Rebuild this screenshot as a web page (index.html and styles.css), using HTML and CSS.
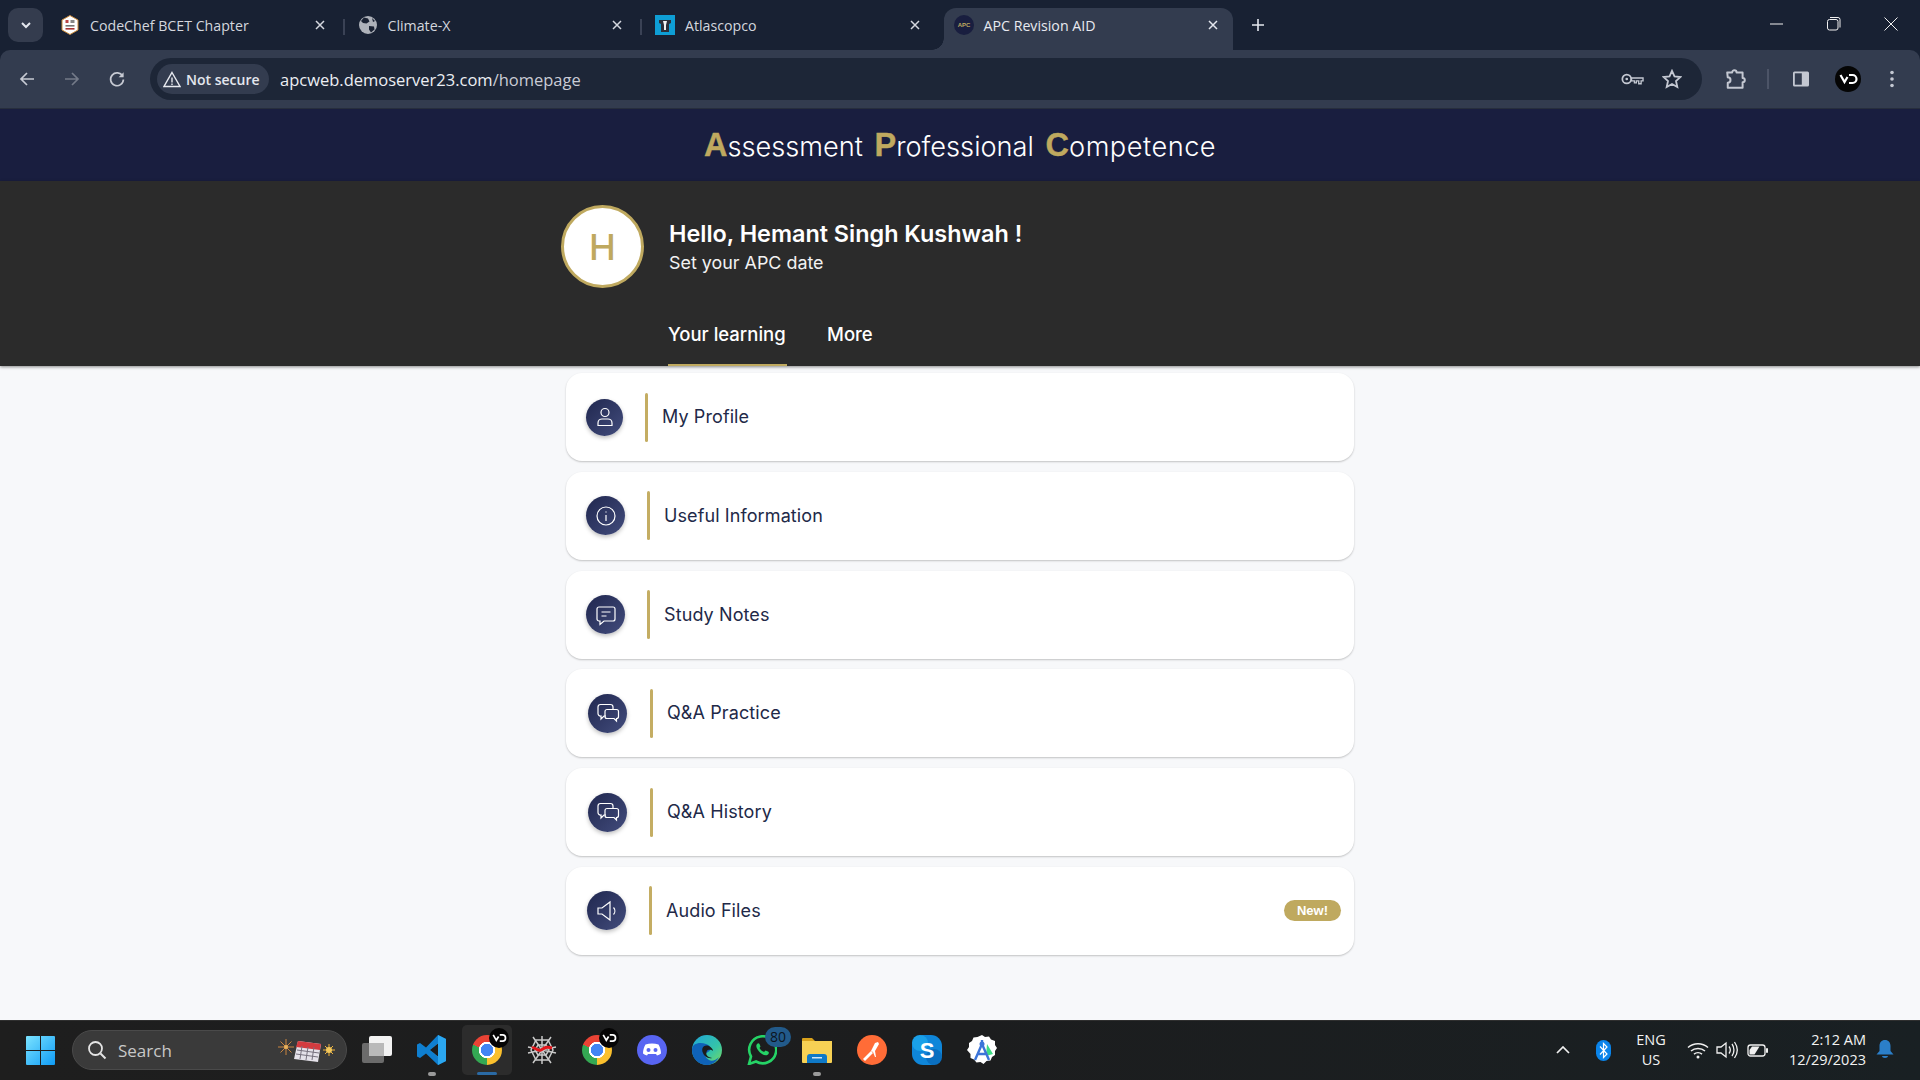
FILE: index.html
```html
<!DOCTYPE html>
<html lang="en">
<head>
<meta charset="utf-8">
<title>APC Revision AID</title>
<link rel="stylesheet" href="styles.css">
</head>
<body>
<div class="browser">
<div class="tabstrip">
  <button class="tab-search"><svg width="12" height="12" viewBox="0 0 12 12"><path d="M2 4l4 4 4-4" fill="none" stroke="#e4e7ee" stroke-width="2"/></svg></button>
  <div class="tab">
    <svg class="fav" viewBox="0 0 20 20"><path d="M10 0.5l8 4.5v10l-8 4.5-8-4.5V5z" fill="#fff" stroke="#c98a3c" stroke-width="1"/><rect x="5.5" y="5" width="3" height="3" fill="#b44"/><rect x="10.5" y="5" width="4" height="3" fill="#888"/><rect x="5.5" y="10" width="9" height="1.6" fill="#777"/><rect x="5.5" y="13" width="9" height="1.6" fill="#a33"/></svg>
    <span class="tab-title">CodeChef BCET Chapter</span>
    <svg class="tab-x" viewBox="0 0 10 10"><path d="M1 1l8 8M9 1l-8 8" stroke="#d5d8df" stroke-width="1.5"/></svg>
  </div>
  <div class="tab">
    <svg class="fav" viewBox="0 0 20 20"><circle cx="10" cy="10" r="9" fill="#aeb2ba"/><path d="M6 2.5l4 1 1.500 3-3 2-3.500-.5-2-2zM11 11l5 .5.5 3-3.500 3-2-3zM14 3l3 3-2 1z" fill="#1a2233"/></svg>
    <span class="tab-title">Climate-X</span>
    <svg class="tab-x" viewBox="0 0 10 10"><path d="M1 1l8 8M9 1l-8 8" stroke="#d5d8df" stroke-width="1.5"/></svg>
  </div>
  <div class="tab tab-last">
    <svg class="fav" viewBox="0 0 20 20"><rect width="20" height="20" fill="#0e9ed5"/><path d="M4 5h12v3l-2 1v8H6V9L4 8z" fill="#2b2f38"/><path d="M8 6h4l-1 4v5H9v-5z" fill="#f2f2f2"/></svg>
    <span class="tab-title">Atlascopco</span>
    <svg class="tab-x" viewBox="0 0 10 10"><path d="M1 1l8 8M9 1l-8 8" stroke="#d5d8df" stroke-width="1.5"/></svg>
  </div>
  <div class="tab tab-active">
    <svg class="fav" viewBox="0 0 20 20"><circle cx="10" cy="10" r="10" fill="#191e3f"/><text x="10" y="12" text-anchor="middle" class="fav-text">APC</text></svg>
    <span class="tab-title">APC Revision AID</span>
    <svg class="tab-x" viewBox="0 0 10 10"><path d="M1 1l8 8M9 1l-8 8" stroke="#e4e7ee" stroke-width="1.5"/></svg>
  </div>
  <svg class="tab-new" viewBox="0 0 14 14"><path d="M7 1v12M1 7h12" stroke="#e4e7ee" stroke-width="1.6"/></svg>
  <div class="winctl">
    <svg viewBox="0 0 14 14" class="w-min"><path d="M0 7h13" stroke="#f0f0f0" stroke-width="1"/></svg>
    <svg viewBox="0 0 14 14" class="w-max"><rect x="0.5" y="2.5" width="10.5" height="10.5" rx="2" fill="none" stroke="#f0f0f0"/><path d="M3 .5h8a2 2 0 0 1 2 2v8" fill="none" stroke="#f0f0f0"/></svg>
    <svg viewBox="0 0 14 14" class="w-close"><path d="M.5.5l13 13M13.500.5l-13 13" stroke="#f0f0f0" stroke-width="1"/></svg>
  </div>
</div>

<div class="toolbar">
  <svg class="nav" viewBox="0 0 18 18"><path d="M16 9H3M9 3L3 9l6 6" fill="none" stroke="#c7cad3" stroke-width="1.7"/></svg>
  <svg class="nav" viewBox="0 0 18 18"><path d="M2 9h13M9 3l6 6-6 6" fill="none" stroke="#747a88" stroke-width="1.7"/></svg>
  <svg class="nav" viewBox="0 0 18 18"><path d="M14.600 6.200A6.400 6.400 0 1 0 15.400 9.500" fill="none" stroke="#c7cad3" stroke-width="1.7"/><path d="M15.600 2.200v5h-5z" fill="#c7cad3"/></svg>
  <div class="omnibox">
    <div class="chip">
      <svg width="18" height="17" viewBox="0 0 18 17"><path d="M9 1.500L17 15.500H1z" fill="none" stroke="#e8eaf0" stroke-width="1.4"/><path d="M9 6.500v5M9 12.500v1.500" stroke="#e8eaf0" stroke-width="1.4"/></svg>
      <span class="chip-text">Not secure</span>
    </div>
    <span class="url">apcweb.demoserver23.com<span class="url-path">/homepage</span></span>
    <svg class="key" viewBox="0 0 24 14"><circle cx="6" cy="7" r="4.600" fill="none" stroke="#c4c8d2" stroke-width="1.800"/><circle cx="6" cy="7" r="1.400" fill="#c4c8d2"/><path d="M11 6h12v3h-2v3h-2.500V9H16v2h-2V9h-3z" fill="none" stroke="#c4c8d2" stroke-width="1.400"/></svg>
    <svg class="star" viewBox="0 0 20 20"><path d="M10 1.800l2.500 5.600 6 .6-4.500 4 1.300 6L10 15l-5.300 3 1.300-6-4.500-4 6-.6z" fill="none" stroke="#c4c8d2" stroke-width="1.800"/></svg>
  </div>
  <svg class="ext" viewBox="0 0 20 20"><path d="M2 4h4.500a2 2 0 0 1 4 0H16v5a2 2 0 0 1 0 4v5H2.500v-4.500a2.500 2.500 0 0 0 0-5z" fill="none" stroke="#c4c8d2" stroke-width="1.800" stroke-linejoin="round"/></svg>
  <span class="tool-sep"></span>
  <svg class="panel" viewBox="0 0 18 18"><rect x="1" y="1.500" width="16" height="15" rx="1.500" fill="#c4c8d2"/><rect x="2.800" y="3.300" width="7" height="11.400" fill="#333c4f"/></svg>
  <svg class="vo" viewBox="0 0 26 26"><circle cx="13" cy="13" r="13" fill="#050505"/><path d="M5.500 9l4 7 3-5M14 9h3.500a4 4 0 0 1 0 8H14" fill="none" stroke="#fff" stroke-width="2.200"/></svg>
  <svg class="dots" viewBox="0 0 4 18"><circle cx="2" cy="2.500" r="1.800" fill="#c4c8d2"/><circle cx="2" cy="9" r="1.800" fill="#c4c8d2"/><circle cx="2" cy="15.500" r="1.800" fill="#c4c8d2"/></svg>
</div>
</div>

<header class="brand">
  <h1 class="brand-title"><span class="cap">A</span>ssessment <span class="cap">P</span>rofessional <span class="cap">C</span><span class="wide">ompetence</span></h1>
</header>

<section class="hero">
  <div class="hero-inner">
    <div class="hero-top">
      <div class="avatar">H</div>
      <div class="hero-text">
        <div class="hello">Hello, Hemant Singh Kushwah !</div>
        <div class="sub">Set your APC date</div>
      </div>
    </div>
    <nav class="hero-tabs">
      <a class="hero-tab hero-tab-on">Your learning</a>
      <a class="hero-tab">More</a>
    </nav>
  </div>
</section>

<main class="content">
  <div class="card">
    <span class="disc disc-a"><svg viewBox="0 0 24 24"><circle cx="12" cy="7.500" r="4" /><path d="M5 20.500v-2.500c0-2.500 2-4 4-4h6c2 0 4 1.500 4 4v2.500z"/></svg></span>
    <span class="rule"></span><span class="label">My Profile</span>
  </div>
  <div class="card">
    <span class="disc"><svg viewBox="0 0 24 24"><circle cx="12" cy="12" r="9"/><path d="M12 11v6M12 7.500v1"/></svg></span>
    <span class="rule"></span><span class="label">Useful Information</span>
  </div>
  <div class="card">
    <span class="disc"><svg viewBox="0 0 24 24"><path d="M5 4h14a2 2 0 0 1 2 2v10a2 2 0 0 1-2 2h-9l-4 3.500V18H5a2 2 0 0 1-2-2V6a2 2 0 0 1 2-2z"/><path d="M7.500 9h9M7.500 13h5"/></svg></span>
    <span class="rule"></span><span class="label">Study Notes</span>
  </div>
  <div class="card">
    <span class="disc disc-c"><svg viewBox="0 0 24 24"><path d="M10 15H8l-3 3v-3a2.500 2.500 0 0 1-3-2.500V6a2.500 2.500 0 0 1 2.500-2.500h10A2.500 2.500 0 0 1 17 6v2"/><path d="M11 8.500h9.500A2 2 0 0 1 22.500 10.500v5a2 2 0 0 1-2 2v2.500l-2.500-2.500h-7A2 2 0 0 1 9 15.500v-5a2 2 0 0 1 2-2z"/></svg></span>
    <span class="rule rule-wide"></span><span class="label">Q&amp;A Practice</span>
  </div>
  <div class="card">
    <span class="disc disc-c"><svg viewBox="0 0 24 24"><path d="M10 15H8l-3 3v-3a2.500 2.500 0 0 1-3-2.500V6a2.500 2.500 0 0 1 2.500-2.500h10A2.500 2.500 0 0 1 17 6v2"/><path d="M11 8.500h9.500A2 2 0 0 1 22.500 10.500v5a2 2 0 0 1-2 2v2.500l-2.500-2.500h-7A2 2 0 0 1 9 15.500v-5a2 2 0 0 1 2-2z"/></svg></span>
    <span class="rule rule-wide"></span><span class="label">Q&amp;A History</span>
  </div>
  <div class="card">
    <span class="disc disc-d"><svg viewBox="0 0 24 24"><path d="M3 9h4l8-6v18l-8-6H3z"/><path d="M18.500 8.500c1.800 2 1.800 5 0 7"/></svg></span>
    <span class="rule rule-wide"></span><span class="label">Audio Files</span>
    <span class="badge">New!</span>
  </div>
</main>

<footer class="taskbar">
  <svg class="winlogo" viewBox="0 0 29 29"><defs><linearGradient id="wl" x1="0" y1="0" x2="1" y2="1"><stop offset="0" stop-color="#7be3ff"/><stop offset="1" stop-color="#0f9bf5"/></linearGradient></defs><path d="M1 0h13v14H0V1a1 1 0 0 1 1-1zM15 0h13a1 1 0 0 1 1 1v13H15zM0 15h14v14H1a1 1 0 0 1-1-1zM15 15h14v13a1 1 0 0 1-1 1H15z" fill="url(#wl)"/></svg>
  <div class="search">
    <svg width="20" height="20" viewBox="0 0 20 20"><circle cx="8.500" cy="8.500" r="6.500" fill="none" stroke="#e4e4e4" stroke-width="1.800"/><path d="M13.500 13.500l5 5" stroke="#e4e4e4" stroke-width="2"/></svg>
    <span class="search-text">Search</span>
    <svg class="search-art" width="60" height="26" viewBox="0 0 60 26"><g stroke="#c9843f" stroke-width="1"><path d="M8 2v16M0 10h16M2.500 4.500l11 11M13.500 4.500l-11 11"/></g><circle cx="8" cy="10" r="2" fill="#e9b35c"/><g stroke="#efb23a" stroke-width="1"><path d="M51 7v12M45 13h12M47 9l8 8M55 9l-8 8"/></g><circle cx="51" cy="13" r="3" fill="#f4c85c"/><path d="M20 4l23 3-3 18-24-3z" fill="#e5e2ea"/><path d="M20 4l23 3-1 6-24-3z" fill="#d33b3f"/><path d="M19 13l22 3M18 17l22 3M24 9l-2 13M30 10l-2 13M36 10l-2 13" stroke="#77727f" stroke-width="1"/></svg>
  </div>
  <div class="slot">
    <svg class="ic" viewBox="0 0 30 30"><rect x="0" y="8" width="22" height="20" rx="2" fill="#6b6b6b"/><rect x="7" y="1" width="23" height="20" rx="2" fill="#f2f2f2"/><rect x="7" y="8" width="15" height="13" fill="#b9b9b9"/></svg>
  </div>
  <div class="slot">
    <svg class="ic" viewBox="0 0 30 30"><path d="M21 0l8 4v22l-8 4-12-11.500-6 4.500-3-1.500V9.500L3 8l6 4.500z" fill="#0f7fd0"/><path d="M21 0l8 4v22l-8 4zM21 8l-8 7 8 7z" fill="#2ba7f0"/><path d="M21 8.500L13 15l8 6.500z" fill="#1c1c1c"/></svg>
    <span class="pip"></span>
  </div>
  <div class="slot slot-on">
    <span class="chrome"></span>
    <svg class="ic-badge" viewBox="0 0 26 26"><circle cx="13" cy="13" r="13" fill="#050505"/><path d="M5.500 9l4 7 3-5M14 9h3.500a4 4 0 0 1 0 8H14" fill="none" stroke="#fff" stroke-width="2.200"/></svg>
    <span class="pip-on"></span>
  </div>
  <div class="slot">
    <svg class="ic" viewBox="0 0 30 30"><g fill="none" stroke="#c9c9c9" stroke-width="1.500"><path d="M15 1v28M1 12l28 6M29 12L1 18M6 2l18 26M24 2L6 28"/><path d="M9 5l12 0 5 10-5 10H9L4 15z"/><path d="M11 10h8l3 5-3 5h-8l-3-5z"/></g><path d="M5 13c3-2 5 4 9 2s5-4 11-2" fill="none" stroke="#e3151a" stroke-width="3"/></svg>
  </div>
  <div class="slot">
    <span class="chrome"></span>
    <svg class="ic-badge" viewBox="0 0 26 26"><circle cx="13" cy="13" r="13" fill="#050505"/><path d="M5.500 9l4 7 3-5M14 9h3.500a4 4 0 0 1 0 8H14" fill="none" stroke="#fff" stroke-width="2.200"/></svg>
  </div>
  <div class="slot">
    <svg class="ic" viewBox="0 0 30 30"><circle cx="15" cy="15" r="15" fill="#5865f2"/><path d="M8.500 9.500c4-1.500 9-1.500 13 0 1.500 2.500 2.500 5.500 2.500 9-1.200 1-2.500 1.500-4 2l-1-1.500h-8l-1 1.500c-1.500-.5-2.800-1-4-2 0-3.500 1-6.500 2.500-9z" fill="#fff"/><circle cx="11.500" cy="15" r="2" fill="#5865f2"/><circle cx="18.500" cy="15" r="2" fill="#5865f2"/></svg>
  </div>
  <div class="slot">
    <svg class="ic" viewBox="0 0 30 30"><defs><linearGradient id="eg" x1="0" y1="0" x2="1" y2="1"><stop offset="0" stop-color="#1fa6d8"/><stop offset=".6" stop-color="#35c4a8"/><stop offset="1" stop-color="#7fdc5a"/></linearGradient></defs><circle cx="15" cy="15" r="15" fill="url(#eg)"/><path d="M0 15C0 8 8 7 14 9c5 1.500 6 6 2 8-3 1.500-4 5 1 8 3 2 7 0 10-3-3 6-8 8-12 8C6 30 0 23 0 15z" fill="#0f62b8"/><path d="M17 11c-6-2-8 3-6 7 1 3 5 6 9 5-5-1-7-4-5-7 1-2 5-1 6 0 0-2-2-4-4-5z" fill="#1c1c1c"/></svg>
  </div>
  <div class="slot">
    <svg class="ic" viewBox="0 0 30 30"><path d="M2 29l2-7.500A13.500 13.500 0 1 1 9 26.500z" fill="none" stroke="#25d366" stroke-width="2.600"/><path d="M10 9c1-1 2-1 2.500 0l1 2.500-1 1.500c1 2 2.500 3 4.500 4l1.500-1.500 2.500 1c1 .5 1 1.500.5 2.500-2 2.500-6 1-9-2s-4-6-2.500-8z" fill="#25d366"/></svg>
    <span class="count">80</span>
  </div>
  <div class="slot">
    <svg class="ic" viewBox="0 0 30 30"><path d="M0 4a1 1 0 0 1 1-1h9l3 3h-13z" fill="#d9a21b"/><path d="M0 6h30v21a1 1 0 0 1-1 1H1a1 1 0 0 1-1-1z" fill="#f7d154"/><path d="M5 22a3 3 0 0 1 3-3h14a3 3 0 0 1 3 3v6H5z" fill="#0f79c7"/><rect x="10" y="22" width="10" height="1.500" fill="#cfe6f7"/></svg>
    <span class="pip"></span>
  </div>
  <div class="slot">
    <svg class="ic" viewBox="0 0 30 30"><circle cx="15" cy="15" r="15" fill="#ff6c37"/><path d="M6 24l8-8 2 2-8 8zM14 16l4-8 3-1 1 2-4 7 1 6-1 0-2-5z" fill="#fff"/></svg>
  </div>
  <div class="slot">
    <svg class="ic" viewBox="0 0 30 30"><rect x="0" y="0" width="30" height="30" rx="11" fill="#0f86d9"/><circle cx="8" cy="8" r="8" fill="#1aa0e8"/><circle cx="22" cy="22" r="8" fill="#0a6fc0"/><text x="15" y="23" text-anchor="middle" class="sk">S</text></svg>
  </div>
  <div class="slot">
    <svg class="ic" viewBox="0 0 30 30"><path d="M15 0l3 2 4-.5 2 3 4 1.500 0 4 2 3-2 3 0 4-3 2-1.500 3.500-4 .5-3 3-3-2-4 .5-2.500-3-3.500-1.500 0-4L0 15l2-3 0-4 3-2 1.500-3.500 4-.5z" fill="#fff"/><path d="M20 9l6 10-7 2z" fill="#3ddc84"/><path d="M15 5v4M15 9L8 25M15 9l7 16M10 19h10" fill="none" stroke="#3b74d8" stroke-width="2.400"/><circle cx="15" cy="9" r="2.500" fill="#3b74d8"/></svg>
  </div>
  <div class="tray">
    <svg class="t-chev" viewBox="0 0 14 8"><path d="M1 7l6-6 6 6" fill="none" stroke="#f0f0f0" stroke-width="1.700"/></svg>
    <div class="t-bt"><svg width="15" height="21" viewBox="0 0 15 21"><rect width="15" height="21" rx="7.500" fill="#0a84ea"/><path d="M4 6.500l7 7.500-3.500 3.500V3.500L11 7l-7 7.500" fill="none" stroke="#fff" stroke-width="1.200"/></svg></div>
    <div class="t-lang"><span>ENG</span><span>US</span></div>
    <svg class="t-wifi" viewBox="0 0 22 18"><g fill="none" stroke="#f0f0f0" stroke-width="1.500"><path d="M1 6.500c5.500-5 14.500-5 20 0M4 10c3.800-3.400 10.200-3.400 14 0M7 13.200c2.300-1.900 5.700-1.900 8 0"/></g><circle cx="11" cy="16" r="1.500" fill="#f0f0f0"/></svg>
    <svg class="t-vol" viewBox="0 0 22 18"><g fill="none" stroke="#f0f0f0" stroke-width="1.300"><path d="M1 6h4l5-4v14l-5-4H1z"/><path d="M13 5.500c1.500 2 1.500 5 0 7M16 3c2.600 3.500 2.600 8.500 0 12M18.500 1c3.500 5 3.500 11 0 16"/></g></svg>
    <svg class="t-bat" viewBox="0 0 22 16"><rect x="1" y="3" width="17" height="11" rx="2.500" fill="none" stroke="#f0f0f0" stroke-width="1.300"/><rect x="19" y="6" width="2" height="5" rx="1" fill="#f0f0f0"/><path d="M2.500 12.500h5l5-8H5L2.500 8z" fill="#f0f0f0"/></svg>
    <div class="t-clock"><span>2:12 AM</span><span>12/29/2023</span></div>
    <div class="t-bell"><svg width="18" height="20" viewBox="0 0 18 20"><path d="M9 0c3.500 0 5.500 2.600 5.500 6v5l3 3.500H.5L3.500 11V6C3.500 2.600 5.500 0 9 0z" fill="#2b7fc9"/><path d="M6 16h6c0 2.500-6 2.500-6 0z" fill="#2b7fc9"/></svg></div>
  </div>
</footer>
</body>
</html>
```
FILE: styles.css
```css
* { box-sizing: border-box; }
html, body { margin: 0; height: 100%; }
body { width: 1920px; height: 1080px; overflow: hidden; display: flex; flex-direction: column; background: #f7f8fa; font-family: "Inter", "Liberation Sans", sans-serif; }

/* Browser chrome */
.browser { background: #182133; flex: none; }
.tabstrip { height: 50px; display: flex; align-items: flex-end; padding-left: 8px; position: relative; }
.tab-search { width: 35px; height: 34px; margin: 0 4px 8px 0; border: 0; border-radius: 10px; background: #343c4e; display: flex; align-items: center; justify-content: center; padding: 0; }
.tab { width: 297.5px; height: 42px; display: flex; align-items: center; padding: 0 20px 8px 13px; color: #d4d7de; font: 14.200px "Open Sans", sans-serif; position: relative; }
.tab::after { content: ""; position: absolute; right: 0; top: 11px; width: 2px; height: 16px; background: #3a4255; }
.tab-last::after, .tab-active::after { display: none; }
.tab-last { width: 301.5px; padding-right: 24px; }
.fav { width: 20px; height: 20px; margin-right: 10px; flex: none; }
.fav-text { font: bold 6px "Liberation Sans", sans-serif; fill: #bfa95f; }
.tab-title { flex: 1; white-space: nowrap; }
.tab-x { width: 10px; height: 10px; flex: none; }
.tab-active { width: 289px; background: #333c4f; border-radius: 12px 12px 0 0; color: #e8eaf0; padding-right: 15px; padding-left: 10px; }
.tab-active::before { content: ""; position: absolute; left: -12px; bottom: 0; width: 12px; height: 12px; background: radial-gradient(circle at 0 0, transparent 11.500px, #333c4f 12px); }
.tab-new { width: 14px; height: 14px; margin: 0 0 18px 18px; flex: none; }
.winctl { margin-left: auto; display: flex; align-items: center; height: 50px; padding-right: 22px; gap: 43px; }
.winctl svg { width: 14px; height: 14px; margin-bottom: 2px; }
.toolbar { height: 59px; background: #333c4f; display: flex; align-items: center; border-radius: 10px 10px 0 0; padding-left: 18px; border-bottom: 1px solid #272e3d; }
.nav { width: 18px; height: 18px; margin-right: 27px; flex: none; }
.omnibox { margin-left: -3px; width: 1552px; height: 42px; border-radius: 21px; background: #1d2637; display: flex; align-items: center; padding: 0 16px 0 7px; color: #e9ebf0; }
.chip { height: 30px; width: 112px; border-radius: 15px; background: #333c4f; display: flex; align-items: center; padding-left: 6px; gap: 5px; flex: none; }
.chip-text { font: 600 14px "Open Sans", sans-serif; color: #e4e7ee; white-space: nowrap; }
.url { margin-left: 11px; font: 16.500px "Open Sans", sans-serif; color: #eceef3; white-space: nowrap; flex: 1; }
.url-path { color: #c9ccd5; }
.key { width: 23px; height: 14px; margin-right: 18px; flex: none; }
.star { width: 20px; height: 20px; flex: none; margin-right: 4px; }
.ext { width: 22px; height: 22px; margin-left: 23px; flex: none; }
.tool-sep { width: 2px; height: 20px; background: #4c5467; margin: 0 23px 0 20px; flex: none; }
.panel { width: 18px; height: 18px; flex: none; }
.vo { width: 26px; height: 26px; margin-left: 25px; flex: none; }
.dots { width: 4px; height: 18px; margin-left: 29px; flex: none; }

/* Brand and hero */
.brand { height: 72px; background: #191e3f; display: flex; align-items: center; justify-content: center; flex: none; }
.brand-title { margin: 0; font: 300 27.200px "Inter", sans-serif; color: #fff; word-spacing: 4px; white-space: nowrap; }
.wide { letter-spacing: .5px; }
.cap { font: bold 32.500px "Liberation Sans", sans-serif; color: #bfa95f; -webkit-text-stroke: .4px #bfa95f; }
.hero { height: 185px; background: #2b2b2b; flex: none; box-shadow: 0 1px 3px rgba(0,0,0,.45); position: relative; }
.hero-inner { width: 798px; margin: 0 auto; padding-top: 24px; }
.hero-top { display: flex; align-items: center; gap: 25px; height: 83px; }
.avatar { width: 83px; height: 83px; border-radius: 50%; background: #fff; border: 3px solid #bfa95f; color: #bfa95f; font: 500 36px "Inter", sans-serif; display: flex; align-items: center; justify-content: center; flex: none; }
.hero-text { padding-top: 2px; }
.hello { font: 600 23.400px/28px "Inter", sans-serif; color: #fff; }
.sub { font: 400 17.900px/26px "Inter", sans-serif; color: #f2f2f2; margin-top: 2px; }
.hero-tabs { display: flex; gap: 40px; margin: 18px 0 0 107px; height: 60px; }
.hero-tab { font: 500 18.500px/22px "Inter", sans-serif; color: #fff; padding-top: 17px; height: 60px; white-space: nowrap; }
.hero-tab-on { width: 119px; border-bottom: 2px solid #bfa95f; }

/* Cards */
.content { flex: 1; width: 788px; margin: 0 auto; padding-top: 7px; display: flex; flex-direction: column; gap: 10.800px; }
.card { height: 88px; background: #fff; border-radius: 16px; box-shadow: 0 1px 2px rgba(0,0,0,.22); display: flex; align-items: center; padding: 0 13px 0 20px; flex: none; }
.disc { height: 39px; width: 39px; border-radius: 50%; background: linear-gradient(135deg, #20274f, #424c7c); box-shadow: 0 2px 4px rgba(0,0,0,.25); display: flex; align-items: center; justify-content: center; flex: none; }
.disc svg { width: 24px; height: 24px; fill: none; stroke: #fff; stroke-width: 1.200; }
.disc-a { width: 37px; height: 37px; }
.disc-c { margin-left: 2px; }
.disc-d { margin-left: 1px; }
.rule { width: 3px; height: 49px; border-radius: 2px; background: #c4ad63; margin: 0 14px 0 22px; flex: none; }
.rule-wide { margin-left: 23px; }
.label { font: 400 18px "Inter", sans-serif; color: #222948; letter-spacing: .1px; padding-bottom: 1px; }
.badge { margin-left: auto; width: 57px; height: 21px; border-radius: 11px; background: #bfa95f; color: #fff; font: bold 13px "Liberation Sans", sans-serif; display: flex; align-items: center; justify-content: center; }

/* Taskbar */
.taskbar { height: 60px; flex: none; background: linear-gradient(90deg, #1e1e1e, #1c1d1e 50%, #192023); border-top: 1px solid #2f2f2f; display: flex; align-items: center; padding: 0 0 1px 26px; color: #f2f2f2; }
.winlogo { width: 29px; height: 29px; margin-right: 17px; flex: none; }
.search { width: 275px; height: 40px; border-radius: 20px; background: #3a3a3a; border: 1px solid #4a4a4a; display: flex; align-items: center; padding-left: 14px; margin-right: 5px; flex: none; }
.search-text { margin-left: 11px; font: 17px "Open Sans", sans-serif; color: #c8c8c8; }
.search-art { margin-left: auto; margin-right: 8px; }
.slot { width: 50px; height: 50px; margin-right: 5px; display: flex; align-items: center; justify-content: center; position: relative; flex: none; border-radius: 5px; }
.slot-on { background: #2c2c2c; }
.ic { width: 30px; height: 30px; }
.sk { font: bold 22px "Liberation Sans", sans-serif; fill: #fff; }
.pip { position: absolute; left: 21px; bottom: -1px; width: 8px; height: 4px; border-radius: 2px; background: #9a9a9a; }
.pip-on { position: absolute; left: 15px; bottom: 0; width: 20px; height: 3px; border-radius: 2px; background: #2a6aa5; }
.chrome { width: 30px; height: 30px; border-radius: 50%; background: radial-gradient(circle, #4285f4 0 6px, #fff 6.500px 8px, transparent 8.500px), conic-gradient(#ea4335 0 60deg, #fbc02d 60deg 180deg, #34a853 180deg 290deg, #ea4335 290deg); }
.ic-badge { position: absolute; right: 3px; top: 3px; width: 20px; height: 20px; }
.count { position: absolute; left: 28px; top: 2px; width: 26px; height: 20px; border-radius: 10px; background: #225a8a; color: #0c1420; font: 14px/20px "Open Sans", sans-serif; text-align: center; }
.tray { margin-left: auto; display: flex; align-items: center; height: 100%; padding-right: 16px; }
.t-chev { width: 14px; height: 8px; margin: 0 13px; flex: none; }
.t-bt { width: 40px; display: flex; justify-content: center; }
.t-lang { width: 56px; margin-right: 5px; display: flex; flex-direction: column; align-items: center; font: 14.500px/20px "Open Sans", sans-serif; }
.t-wifi { width: 22px; height: 18px; margin: 0 3px; flex: none; }
.t-vol { width: 22px; height: 18px; margin: 0 4px; flex: none; }
.t-bat { width: 22px; height: 16px; margin: 0 5px; flex: none; }
.t-clock { width: 92px; display: flex; flex-direction: column; align-items: flex-end; font: 14.500px/20px "Open Sans", sans-serif; white-space: nowrap; }
.t-bell { width: 38px; display: flex; justify-content: center; }
```
